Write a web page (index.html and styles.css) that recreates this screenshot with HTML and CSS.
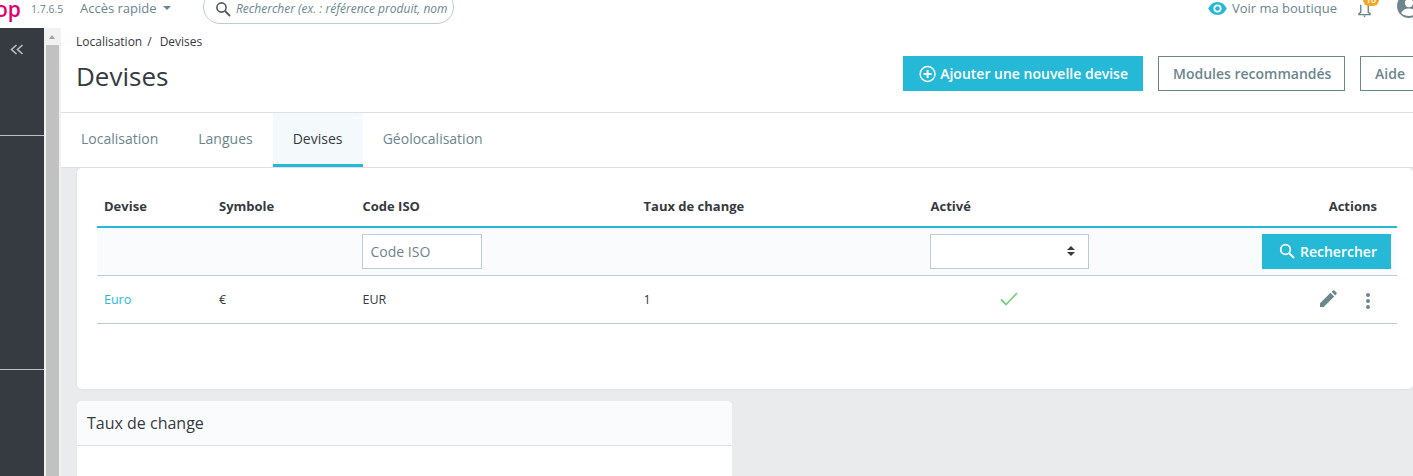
FILE: index.html
```html
<!DOCTYPE html>
<html lang="fr">
<head>
<meta charset="utf-8">
<title>Devises</title>
<link rel="stylesheet" href="styles.css">
</head>
<body>
<header class="topbar">
  <span class="logo">op</span>
  <span class="version">1.7.6.5</span>
  <span class="quick">Accès rapide<i class="caret"></i></span>
  <div class="search">
    <svg class="search-icon" viewBox="0 0 16 16" width="16" height="16"><circle cx="6.5" cy="6.5" r="4.6" fill="none" stroke="#4f5b60" stroke-width="1.6"/><path d="M10 10l5 5" stroke="#4f5b60" stroke-width="1.8" fill="none"/></svg>
    <span class="search-text">Rechercher (ex. : référence produit, nom</span>
  </div>
  <div class="top-right">
    <svg class="eye" viewBox="0 0 20 14" width="19" height="13"><path fill="#25b9d7" d="M10 0C5.5 0 2 3 0 7c2 4 5.500 7 10 7s8-3 10-7c-2-4-5.500-7-10-7z"/><circle cx="10" cy="7" r="4.300" fill="#fff"/><circle cx="10" cy="7" r="2.500" fill="#25b9d7"/></svg>
    <span class="shop">Voir ma boutique</span>
    <span class="bell">
      <svg viewBox="0 0 16 18" width="15" height="17"><path d="M4 4v8l-2 1.500v1h12v-1l-2-1.500V4" fill="none" stroke="#6c868e" stroke-width="1.500"/><path d="M6.500 15.500h3l-1.500 2z" fill="#6c868e"/></svg>
      <b class="badge">10</b>
    </span>
    <svg class="avatar" viewBox="0 0 20 20" width="24" height="24"><circle cx="10" cy="10" r="10" fill="#6c868e"/><circle cx="10" cy="7.500" r="3.500" fill="#fff"/><path d="M3.500 16c1-3 4-4 6.500-4s5.500 1 6.500 4c-3.500 3-9.500 3-13 0z" fill="#fff"/></svg>
  </div>
</header>
<div class="shell">
  <aside class="sidebar">
    <div class="collapse">
      <svg viewBox="0 0 14 11" width="14" height="11"><path d="M6.500 1L1.500 5.500l5 4.500M12.500 1L7.500 5.500l5 4.500" fill="none" stroke="#bebebe" stroke-width="1.600"/></svg>
    </div>
    <div class="side-block"></div>
    <div class="side-block last"></div>
  </aside>
  <div class="scrollbar"><i class="arrow"></i><div class="thumb"></div></div>
  <main class="main">
    <section class="page-head">
      <nav class="crumbs"><span>Localisation</span><span class="sep">/</span><span>Devises</span></nav>
      <div class="title-row">
        <h1>Devises</h1>
        <div class="actions">
          <a class="btn primary"><svg viewBox="0 0 18 18" width="18" height="18"><circle cx="9" cy="9" r="7.800" fill="none" stroke="#fff" stroke-width="1.500"/><path d="M9 4.800v8.400M4.800 9h8.400" stroke="#fff" stroke-width="2"/></svg>Ajouter une nouvelle devise</a>
          <a class="btn outline">Modules recommandés</a>
          <a class="btn outline help">Aide</a>
        </div>
      </div>
    </section>
    <nav class="tabs">
      <a class="tab">Localisation</a>
      <a class="tab">Langues</a>
      <a class="tab active">Devises<i class="tab-mark"></i></a>
      <a class="tab">Géolocalisation</a>
    </nav>
    <div class="content">
      <section class="card list-card">
        <table class="grid">
          <colgroup>
            <col class="c1"><col class="c2"><col class="c3"><col class="c4"><col class="c5"><col>
          </colgroup>
          <thead>
            <tr><th>Devise</th><th>Symbole</th><th>Code ISO</th><th>Taux de change</th><th>Activé</th><th class="right actions-head">Actions</th></tr>
          </thead>
          <tbody>
            <tr class="filters">
              <td></td><td></td>
              <td><input class="field iso" placeholder="Code ISO"></td>
              <td></td>
              <td><div class="field select"><svg viewBox="0 0 8 12" width="8" height="12"><path d="M4 1l4 4H0zM4 11l4-4H0z" fill="#363a41"/></svg></div></td>
              <td class="right"><a class="btn search-btn"><svg viewBox="0 0 16 16" width="16" height="16"><circle cx="6.500" cy="6.500" r="4.800" fill="none" stroke="#fff" stroke-width="1.700"/><path d="M10 10l5 5" stroke="#fff" stroke-width="2" fill="none"/></svg>Rechercher</a></td>
            </tr>
            <tr class="row">
              <td><a class="link">Euro</a></td>
              <td>€</td>
              <td>EUR</td>
              <td>1</td>
              <td class="check-cell"><svg viewBox="0 0 18 14" width="18" height="14"><path d="M1 7.500l5 5L17 1" fill="none" stroke="#78d07d" stroke-width="1.800"/></svg></td>
              <td class="right row-actions">
                <svg viewBox="0 0 18 18" width="18" height="18"><path fill="#6c868e" d="M1 17v-3.700L11.500 2.800l3.700 3.700L4.700 17zM12.600 1.700l1.500-1.200c.4-.3 1-.3 1.300 0l2.100 2.100c.3.400.3.900 0 1.300l-1.200 1.500z"/></svg>
                <svg class="dots" viewBox="0 0 6 18" width="6" height="18"><circle cx="3" cy="3" r="2" fill="#6c868e"/><circle cx="3" cy="9" r="2" fill="#6c868e"/><circle cx="3" cy="15" r="2" fill="#6c868e"/></svg>
              </td>
            </tr>
          </tbody>
        </table>
      </section>
      <section class="card rate-card">
        <h2>Taux de change</h2>
      </section>
    </div>
  </main>
</div>
</body>
</html>
```

FILE: styles.css
```css
* { box-sizing: border-box; }
html, body { margin: 0; height: 476px; overflow: hidden; background: #fff; }
body { font-family: "Open Sans", "Liberation Sans", sans-serif; font-size: 12px; color: #363a41; }

.topbar { height: 28px; display: flex; align-items: center; background: #fff; overflow: hidden; }
.logo { margin: -11px 0 0 -5px; width: 32px; flex: none; font: 600 21px/28px "Open Sans", sans-serif; color: #e5006f; }
.version { font-size: 10.5px; color: #6c868e; margin-left: 4px; margin-top: -10px; width: 49px; flex: none; }
.quick { font-size: 13px; color: #6c868e; display: flex; align-items: center; margin-top: -12px; width: 123px; flex: none; }
.caret { margin-left: 6px; border: 4.500px solid transparent; border-top-color: #6c868e; border-bottom: 0; }
.search { width: 251px; height: 34px; margin-top: -14px; border: 1px solid #bbcdd2; border-radius: 17px; display: flex; align-items: flex-end; padding: 0 0 6px 11px; white-space: nowrap; overflow: hidden; background: #fff; flex: none; }
.search-icon { flex: none; }
.search-text { margin-left: 5px; font-size: 12px; font-style: italic; color: #6c868e; line-height: 16px; }
.top-right { margin-left: auto; display: flex; align-items: center; margin-top: -12px; margin-right: -8px; }
.eye { margin-right: 5px; }
.shop { font-size: 13px; color: #6c868e; }
.bell { position: relative; margin: 2px 0 0 20px; display: flex; }
.badge { position: absolute; left: 6px; top: -7px; width: 16px; height: 12px; border-radius: 7px; background: #f5a623; color: #fff; font-size: 9px; line-height: 11px; text-align: center; font-weight: 600; }
.avatar { margin: 0 0 4px 25px; }

.shell { display: flex; height: 448px; }
.sidebar { width: 44px; flex: none; background: #363a41; }
.collapse { height: 108px; padding: 16px 0 0 10px; border-bottom: 1px solid #bebebe; }
.collapse svg { display: block; }
.side-block { height: 234px; border-bottom: 1px solid #bebebe; }
.side-block.last { height: 106px; border: 0; }
.scrollbar { width: 17px; flex: none; display: flex; flex-direction: column; background: #f1f1f1; }
.arrow { display: block; width: 0; margin: 7px 0 0 5px; border: 3.500px solid transparent; border-bottom: 4px solid #a3a3a3; border-top: 0; }
.thumb { margin: 6px 0 0 2px; flex: 1; width: 13px; background: #c1c1c1; }

.main { flex: 1; min-width: 0; display: flex; flex-direction: column; overflow: hidden; }
.page-head { height: 85px; flex: none; background: #fff; padding: 6px 0 0 15px; border-bottom: 1px solid #dfdfdf; }
.crumbs { font-size: 12px; line-height: 15px; color: #363a41; display: flex; }
.sep { margin: 0 8px 0 5px; }
.title-row { display: flex; align-items: flex-start; margin-top: 7px; }
h1 { margin: 0; font-size: 26px; font-weight: 400; line-height: 40px; }
.actions { margin-left: auto; display: flex; gap: 15px; margin-right: -17px; flex: none; }
.btn { height: 35px; display: flex; align-items: center; font-size: 14px; font-weight: 600; white-space: nowrap; }
.btn.primary { background: #25b9d7; color: #fff; padding: 0 15px 0 16px; gap: 4px; width: 240px; }
.btn.outline { border: 1px solid #6c868e; color: #6c868e; background: #fff; padding: 0 14px; width: 187px; }
.btn.help { width: 70px; }

.tabs { height: 55px; display: flex; background: #fff; border-bottom: 1px solid #dfdfdf; flex: none; }
.tab { padding: 0 20px; height: 54px; line-height: 52px; font-size: 14px; color: #6c868e; position: relative; }
.tab.active { width: 90px; background: #f4f9fb; color: #363a41; border-bottom: 3px solid #25b9d7; }
.tab-mark { position: absolute; right: 1px; top: 4px; width: 9px; height: 2px; background: #fff; }

.content { flex: 1; background: #eaebec; padding-left: 16px; overflow: hidden; }
.card { background: #fff; border-radius: 5px; }
.list-card { height: 221px; padding: 21px 16px 0 20px; box-shadow: 0 0 4px 0 rgba(0,0,0,.06); }
.rate-card { width: 655px; margin-top: 12px; height: 75px; border-radius: 5px 5px 0 0; }
h2 { margin: 0; height: 45px; padding: 0 10px; background: #fafbfc; border-bottom: 1px solid #dfe3e6; font-size: 16px; font-weight: 400; line-height: 44px; border-radius: 5px 5px 0 0; }

.grid { width: 100%; table-layout: fixed; border-collapse: collapse; font-size: 12.500px; }
.c1 { width: 115px; } .c2 { width: 143.500px; } .c3 { width: 281px; } .c4 { width: 287px; } .c5 { width: 210px; }
.grid th { height: 38px; padding: 0 7px 4px; text-align: left; font-size: 13px; font-weight: 700; border-bottom: 2px solid #25b9d7; }
.grid td { padding: 0 7px; }
.grid .right { text-align: right; }
.grid .actions-head { padding-right: 20px; }
.filters { height: 48px; background: #fafbfc; }
.filters td { border-bottom: 1px solid #bbcdd2; }
.field { display: block; height: 35px; margin-left: -1px; border: 1px solid #bbcdd2; background: #fff; border-radius: 0; }
.iso { width: 120px; padding: 0 8px; font: 14px "Open Sans", sans-serif; }
.iso::placeholder { color: #6c868e; opacity: 1; }
.select { width: 159px; display: flex; align-items: center; justify-content: flex-end; padding-right: 13px; }
.grid .filters td.right { padding-right: 6px; }
.search-btn { display: inline-flex; width: 129px; padding: 0 14px 0 17px; gap: 5px; background: #25b9d7; color: #fff; text-align: left; }
.row { height: 48px; }
.row td { border-bottom: 1px solid #bbcdd2; color: #363a41; }
.link { color: #25b9d7; }
.grid .check-cell { padding-left: 76px; }
.check-cell svg { display: block; }
.grid .row-actions { padding-right: 26px; }
.row-actions svg { vertical-align: middle; }
.row-actions .dots { margin: 4px 0 0 25px; }
```
